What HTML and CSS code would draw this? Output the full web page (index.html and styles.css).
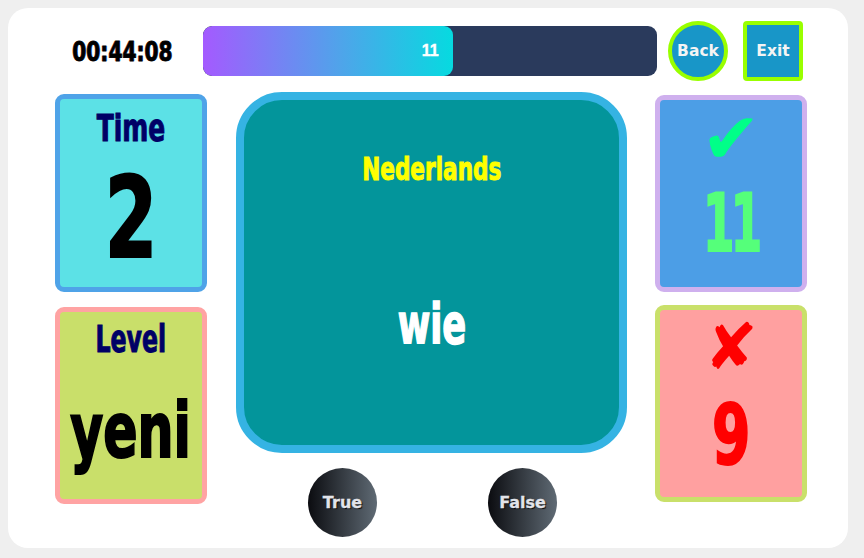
FILE: index.html
```html
<!DOCTYPE html>
<html>
<head>
<meta charset="utf-8">
<link rel="stylesheet" href="styles.css">
</head>
<body>
<div class="app">
  <div class="topbar">
    <div class="timer"><span class="cond">00:44:08</span></div>
    <div class="progress">
      <div class="fill" style="width:55%"><span>11</span></div>
    </div>
    <button class="back">Back</button>
    <button class="exit">Exit</button>
  </div>
  <div class="main">
    <div class="col left">
      <div class="panel time">
        <div class="label cond">Time</div>
        <div class="big two cond">2</div>
      </div>
      <div class="panel level">
        <div class="label cond">Level</div>
        <div class="big yeni cond">yeni</div>
      </div>
    </div>
    <div class="col center">
      <div class="word-card">
        <div class="lang cond">Nederlands</div>
        <div class="word cond">wie</div>
      </div>
      <div class="answers">
        <button class="answer">True</button>
        <button class="answer">False</button>
      </div>
    </div>
    <div class="col right">
      <div class="panel correct">
        <div class="sym check">✔</div>
        <div class="big count cond">11</div>
      </div>
      <div class="panel wrong">
        <div class="sym cross">✘</div>
        <div class="big nine cond">9</div>
      </div>
    </div>
  </div>
</div>
</body>
</html>
```

FILE: styles.css
```css
* { box-sizing: border-box; }
html, body { margin: 0; padding: 0; }
body {
  background: #efefef;
  width: 864px;
  height: 558px;
  overflow: hidden;
  font-family: "DejaVu Sans Condensed", "DejaVu Sans", sans-serif;
}
.cond {
  display: inline-block;
  transform: scaleX(0.73);
  white-space: nowrap;
}
.app {
  margin: 8px;
  width: 840px;
  height: 540px;
  background: #ffffff;
  border-radius: 20px;
  padding: 13px 0 0 47px;
}
.topbar {
  display: flex;
  align-items: center;
  height: 60px;
}
.timer {
  width: 148px;
  text-align: center;
  font-weight: bold;
  font-size: 27px;
  color: #000;
  padding-right: 13px;
}
.timer .cond {
  transform: scaleX(0.83);
  -webkit-text-stroke: 0.8px #000;
  text-shadow: 1px 0 0 rgba(0, 120, 255, 0.35), -1px 0 0 rgba(255, 0, 0, 0.3);
}
.progress {
  width: 454px;
  height: 50px;
  background: #2a3a5c;
  border-radius: 9px;
  overflow: hidden;
}
.fill {
  height: 100%;
  border-radius: 9px;
  background: linear-gradient(90deg, #a45aff 0%, #4fa4ea 55%, #06dae0 100%);
  display: flex;
  align-items: center;
  justify-content: flex-end;
  padding-right: 14px;
}
.fill span {
  color: #fff;
  font-family: "Liberation Sans", Arial, sans-serif;
  font-weight: bold;
  font-size: 16px;
  -webkit-text-stroke: 0.4px #fff;
}
button {
  cursor: pointer;
  padding: 0;
}
.back, .exit {
  width: 60px;
  height: 60px;
  background: #1896c8;
  border: 4px solid #99ff00;
  color: #f4f4f4;
  font-family: "DejaVu Sans", sans-serif;
  font-weight: bold;
  font-size: 15.5px;
}
.back { margin-left: 11px; border-radius: 50%; }
.exit { margin-left: 15px; border-radius: 4px; }

.main {
  display: flex;
  margin-top: 11px;
  align-items: flex-start;
}
.col { display: flex; flex-direction: column; }
.left { width: 152px; padding-top: 2px; gap: 15px; }
.center { width: 391px; margin-left: 29px; }
.right { width: 152px; margin-left: 28px; padding-top: 3px; gap: 13px; }

.panel {
  width: 152px;
  border: 5px solid;
  border-radius: 9px;
  display: flex;
  flex-direction: column;
  align-items: center;
  line-height: 1;
  font-weight: bold;
}
.time { height: 198px; background: #5ce1e6; border-color: #4fa3e8; padding-top: 10px; }
.level { height: 197px; background: #c9df6a; border-color: #ffa3a3; padding-top: 9px; }
.correct { height: 197px; background: #4c9ee6; border-color: #cfb0ee; padding-top: 5px; }
.wrong { height: 197px; background: #ffa0a0; border-color: #c9e06a; padding-top: 5px; }

.label {
  color: #000066;
  font-size: 38px;
  -webkit-text-stroke: 1px #000066;
}
.level .label { font-size: 37px; transform: scaleX(0.71); }
.big { color: #000; -webkit-text-stroke: 2px #000; }
.two { font-size: 112px; margin-top: 15px; transform: scaleX(0.75); }
.yeni { font-size: 76px; margin-top: 35px; transform: scaleX(0.74); }

.sym {
  font-family: "DejaVu Sans", sans-serif;
  font-size: 64px;
  line-height: 1;
  font-weight: normal;
}
.check { color: #00ff88; font-size: 71px; line-height: 68px; }
.cross { color: #ff0000; }
.count {
  font-size: 81px;
  margin-top: 10px;
  color: #55ff7a;
  -webkit-text-stroke: 2px #55ff7a;
  transform: scaleX(0.62);
  letter-spacing: -6px;
}
.nine {
  font-size: 84px;
  margin-top: 14px;
  color: #ff0000;
  -webkit-text-stroke: 2px #ff0000;
}

.word-card {
  height: 361px;
  background: #03959b;
  border: 8px solid #35b3e3;
  border-radius: 46px;
  display: flex;
  flex-direction: column;
  align-items: center;
  padding-top: 53px;
  line-height: 1;
  font-weight: bold;
}
.lang { font-size: 32px; color: #ffff00; -webkit-text-stroke: 1px #ffff00; transform: scaleX(0.75); }
.word { font-size: 56px; color: #fff; margin-top: 111px; -webkit-text-stroke: 1.5px #fff; transform: scaleX(0.7); }

.answers {
  display: flex;
  margin-top: 15px;
  padding-left: 72px;
  gap: 111px;
}
.answer {
  width: 69px;
  height: 69px;
  border-radius: 50%;
  border: none;
  background: linear-gradient(90deg, #0b0c10 0%, #5f6a74 100%);
  color: #e2e4ea;
  font-family: "DejaVu Sans", sans-serif;
  font-weight: bold;
  font-size: 16px;
  -webkit-text-stroke: 0.3px #e2e4ea;
  text-shadow: 1px 1px 1px #000;
}
```
